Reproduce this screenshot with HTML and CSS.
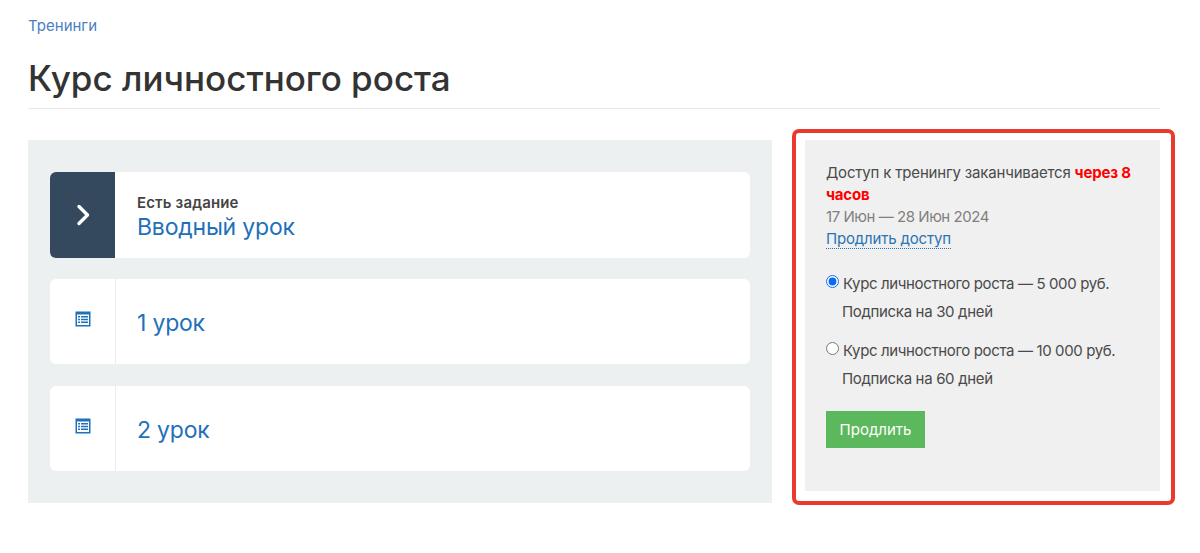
FILE: index.html
```html
<!DOCTYPE html>
<html lang="ru">
<head>
<meta charset="utf-8">
<title>Курс личностного роста</title>
<link rel="stylesheet" href="styles.css">
</head>
<body>
<div class="page">
  <a class="crumb" href="#">Тренинги</a>
  <h1 class="title">Курс личностного роста</h1>
  <div class="columns">
    <main class="lessons">
      <a class="card card-first" href="#">
        <span class="card-icon card-icon-active">
          <svg width="14" height="22" viewBox="0 0 14 22"><path d="M3 2.500l8.500 8.500L3 19.500" fill="none" stroke="#fff" stroke-width="3.400" stroke-linecap="round" stroke-linejoin="round"/></svg>
        </span>
        <span class="card-body">
          <span class="card-note">Есть задание</span>
          <span class="card-name">Вводный урок</span>
        </span>
      </a>
      <a class="card" href="#">
        <span class="card-icon">
          <svg width="16" height="16" viewBox="0 0 16 16"><path fill="#1f71b8" fill-rule="evenodd" d="M0.500 0.500h15v15h-15zM2 3.500V14h12V3.500z"/><path fill="#1f71b8" d="M3 5h2v1.500H3zM6 5h7v1.500H6zM3 7.800h2v1.500H3zM6 7.800h7v1.500H6zM3 10.600h2v1.500H3zM6 10.600h7v1.500H6z"/></svg>
        </span>
        <span class="card-body"><span class="card-name">1 урок</span></span>
      </a>
      <a class="card" href="#">
        <span class="card-icon">
          <svg width="16" height="16" viewBox="0 0 16 16"><path fill="#1f71b8" fill-rule="evenodd" d="M0.500 0.500h15v15h-15zM2 3.500V14h12V3.500z"/><path fill="#1f71b8" d="M3 5h2v1.500H3zM6 5h7v1.500H6zM3 7.800h2v1.500H3zM6 7.800h7v1.500H6zM3 10.600h2v1.500H3zM6 10.600h7v1.500H6z"/></svg>
        </span>
        <span class="card-body"><span class="card-name">2 урок</span></span>
      </a>
    </main>
    <aside class="side">
      <div class="highlight"></div>
      <p class="access">Доступ к тренингу заканчивается <b class="deadline">через 8 часов</b></p>
      <p class="dates">17 Июн — 28 Июн 2024</p>
      <a class="extend-link" href="#">Продлить доступ</a>
      <form class="plans">
        <label class="plan">
          <span class="plan-line"><input class="plan-radio" type="radio" name="plan" checked>Курс личностного роста — 5 000 руб.</span>
          <span class="plan-sub">Подписка на 30 дней</span>
        </label>
        <label class="plan">
          <span class="plan-line"><input class="plan-radio" type="radio" name="plan">Курс личностного роста — 10 000 руб.</span>
          <span class="plan-sub">Подписка на 60 дней</span>
        </label>
        <button class="extend-btn" type="button">Продлить</button>
      </form>
    </aside>
  </div>
</div>
</body>
</html>
```
FILE: styles.css
```css
* { box-sizing: border-box; }
html, body { margin: 0; background: #fff; }
body {
  font-family: Inter, "Noto Sans", sans-serif;
  color: #333;
  height: 553px;
  overflow: hidden;
}
.page { padding: 16px 40px 0 28px; }
.crumb {
  display: block;
  font-size: 15px;
  line-height: 20px;
  color: #4a7fc0;
  text-decoration: none;
}
.title {
  margin: 20px 0 0;
  padding-bottom: 8px;
  height: 53px;
  font-size: 35px;
  line-height: 44px;
  font-weight: 500;
  color: #333;
  letter-spacing: 0;
  border-bottom: 1px solid #e8e8e8;
}
.columns {
  display: flex;
  align-items: flex-start;
  justify-content: space-between;
  margin-top: 31px;
}
.lessons {
  width: 744px;
  height: 363px;
  padding: 32px 22px;
  background: #ecf0f1;
  display: flex;
  flex-direction: column;
  gap: 22px;
}
.card {
  display: flex;
  height: 85px;
  background: #fff;
  border-radius: 6px;
  overflow: hidden;
  text-decoration: none;
}
.card-first { height: 86px; margin-bottom: -1px; }
.card-icon {
  flex: none;
  width: 66px;
  display: flex;
  align-items: center;
  justify-content: center;
  border-right: 1px solid #ececec;
  padding-bottom: 5px;
}
.card-icon-active {
  width: 65px;
  background: #34495e;
  border-right: 0;
  padding-bottom: 0;
}
.card-body {
  flex: 1;
  display: flex;
  flex-direction: column;
  justify-content: center;
  padding: 2px 0 0 21px;
}
.card-first .card-body { padding: 5px 0 0 22px; }
.card-note {
  font-size: 15px;
  line-height: 17px;
  margin-bottom: 1px;
  font-weight: 600;
  letter-spacing: 0.15px;
  color: #444;
}
.card-name {
  font-size: 23px;
  line-height: 30px;
  letter-spacing: -0.2px;
  color: #1f71b8;
}
.side {
  position: relative;
  width: 355px;
  height: 351px;
  padding: 22px 21px 0;
  background: #f0f0f0;
  font-size: 15px;
  line-height: 22px;
  letter-spacing: -0.18px;
  color: #4a4a4a;
}
.highlight {
  position: absolute;
  left: -13px;
  top: -11px;
  width: 383px;
  height: 376px;
  border: 4px solid #ea3a30;
  border-radius: 7px;
  pointer-events: none;
}
.access { margin: 0; }
.deadline { color: #f00; font-weight: 700; }
.dates { margin: 0; color: #808080; letter-spacing: -0.45px; }
.extend-link {
  display: inline-block;
  line-height: 18px;
  margin-top: 1px;
  color: #2a74b5;
  text-decoration: none;
  border-bottom: 1px dotted #2a74b5;
}
.plans { margin-top: 20px; }
.plan { display: block; margin-bottom: 11px; }
.plan-line { display: flex; align-items: center; height: 28px; white-space: nowrap; letter-spacing: -0.37px; }
.plan-radio { width: 13px; height: 13px; margin: 0 4px 5px 0; accent-color: #0b6bf0; }
.plan-sub { display: block; height: 28px; line-height: 28px; padding-left: 16px; letter-spacing: -0.33px; }
.extend-btn {
  display: block;
  width: 99px;
  height: 37px;
  margin-top: 18px;
  padding: 0;
  border: 1px solid #5cb85c;
  background: #5cb85c;
  color: #fff;
  font: inherit;
  font-size: 15px;
}
```
